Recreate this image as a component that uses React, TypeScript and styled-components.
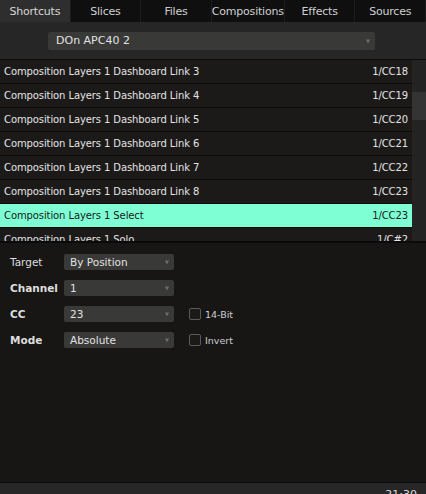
import React from 'react'
import styled, { createGlobalStyle } from 'styled-components'

const GlobalStyle = createGlobalStyle`
  html, body {
    margin: 0;
    padding: 0;
    background: #161514;
  }
  body {
    font-family: "DejaVu Sans", Verdana, sans-serif;
    font-size: 10px;
    color: #dcdcdc;
  }
`

const Screen = styled.div`
  width: 426px;
  height: 494px;
  display: flex;
  flex-direction: column;
  overflow: hidden;
  background: #161514;
`

const TabBar = styled.div`
  display: grid;
  grid-template-columns: repeat(6, 1fr);
  height: 22px;
  background: #0f0f0f;
  flex-shrink: 0;
`

const Tab = styled.div<{ active?: boolean }>`
  display: flex;
  align-items: center;
  justify-content: center;
  font-size: 11px;
  letter-spacing: -0.2px;
  color: ${({ active }) => (active ? '#d6d6d6' : '#cfcfcf')};
  background: ${({ active }) => (active ? '#2e2e2e' : '#0f0f0f')};
  border-right: 1px solid #1c1c1c;
`

const DeviceBar = styled.div`
  height: 37px;
  background: #262626;
  display: flex;
  align-items: center;
  padding: 0 51px 0 48px;
  border-bottom: 1px solid #0c0c0c;
  flex-shrink: 0;
`

const Select = styled.div<{ width?: number }>`
  position: relative;
  box-sizing: border-box;
  width: ${({ width }) => (width ? `${width}px` : '100%')};
  height: ${({ width }) => (width ? '16px' : '18px')};
  padding-left: ${({ width }) => (width ? '6px' : '8px')};
  background: #393938;
  border-radius: 2px;
  display: flex;
  align-items: center;
  font-size: ${({ width }) => (width ? '10.5px' : '11px')};
  color: #e2e2e2;
`

const Arrow = styled.span`
  position: absolute;
  right: 5px;
  top: 50%;
  transform: translateY(-40%);
  width: 0;
  height: 0;
  border-left: 2.5px solid transparent;
  border-right: 2.5px solid transparent;
  border-top: 4px solid #6e6e6e;
`

const ListArea = styled.div`
  display: flex;
  height: 181px;
  flex-shrink: 0;
  border-bottom: 2px solid #0a0a0a;
`

const List = styled.div`
  flex: 1;
  overflow: hidden;
  background: #0b0b0b;
`

const Row = styled.div<{ selected?: boolean }>`
  height: 23px;
  margin-bottom: 1px;
  display: flex;
  align-items: center;
  justify-content: space-between;
  padding: 0 4px 0 4px;
  font-size: 10px;
  letter-spacing: -0.1px;
  background: ${({ selected }) => (selected ? '#7fffd4' : '#1c1a19')};
  color: ${({ selected }) => (selected ? '#1a1a1a' : '#e4e4e4')};
`

const Scrollbar = styled.div`
  width: 14px;
  background: #232323;
  position: relative;
`

const Thumb = styled.div`
  position: absolute;
  top: 32px;
  left: 0;
  right: 0;
  height: 28px;
  background: #343434;
`

const Form = styled.div`
  flex: 1;
  background: #171615;
  padding: 11px 0 0 10px;
  display: flex;
  flex-direction: column;
  gap: 10px;
`

const FormRow = styled.div`
  display: flex;
  align-items: center;
  height: 16px;
`

const Label = styled.div<{ bold?: boolean }>`
  width: 54px;
  font-size: 10.5px;
  font-weight: ${({ bold }) => (bold ? 700 : 400)};
  color: #dedede;
`

const Check = styled.label`
  display: flex;
  align-items: center;
  gap: 4px;
  margin-left: 15px;
  font-size: 9.5px;
  color: #cfcfcf;
`

const Box = styled.span`
  width: 10px;
  height: 10px;
  border: 1px solid #5a5a5a;
  border-radius: 2px;
  background: #1b1a19;
`

const Footer = styled.div`
  height: 11px;
  border-top: 1px solid #0a0a0a;
  background: #272727;
  display: flex;
  justify-content: flex-end;
  align-items: flex-start;
  padding-right: 9px;
  overflow: hidden;
  flex-shrink: 0;
`

const Clock = styled.span`
  font-size: 11px;
  line-height: 11px;
  margin-top: 6px;
  color: #d8d8d8;
`

const tabs = ['Shortcuts', 'Slices', 'Files', 'Compositions', 'Effects', 'Sources']

const rows: [string, string, boolean?][] = [
  ['Composition Layers 1 Dashboard Link 3', '1/CC18'],
  ['Composition Layers 1 Dashboard Link 4', '1/CC19'],
  ['Composition Layers 1 Dashboard Link 5', '1/CC20'],
  ['Composition Layers 1 Dashboard Link 6', '1/CC21'],
  ['Composition Layers 1 Dashboard Link 7', '1/CC22'],
  ['Composition Layers 1 Dashboard Link 8', '1/CC23'],
  ['Composition Layers 1 Select', '1/CC23', true],
  ['Composition Layers 1 Solo', '1/C#2'],
]

const App: React.FC = () => (
  <Screen>
    <GlobalStyle />
    <TabBar>
      {tabs.map((t, i) => (
        <Tab key={t} active={i === 0}>
          {t}
        </Tab>
      ))}
    </TabBar>
    <DeviceBar>
      <Select>
        DOn APC40 2
        <Arrow />
      </Select>
    </DeviceBar>
    <ListArea>
      <List>
        {rows.map(([name, cc, sel]) => (
          <Row key={name} selected={sel}>
            <span>{name}</span>
            <span>{cc}</span>
          </Row>
        ))}
      </List>
      <Scrollbar>
        <Thumb />
      </Scrollbar>
    </ListArea>
    <Form>
      <FormRow>
        <Label>Target</Label>
        <Select width={110}>
          By Position
          <Arrow />
        </Select>
      </FormRow>
      <FormRow>
        <Label bold>Channel</Label>
        <Select width={110}>
          1
          <Arrow />
        </Select>
      </FormRow>
      <FormRow>
        <Label bold>CC</Label>
        <Select width={110}>
          23
          <Arrow />
        </Select>
        <Check>
          <Box />
          14-Bit
        </Check>
      </FormRow>
      <FormRow>
        <Label bold>Mode</Label>
        <Select width={110}>
          Absolute
          <Arrow />
        </Select>
        <Check>
          <Box />
          Invert
        </Check>
      </FormRow>
    </Form>
    <Footer>
      <Clock>21:30</Clock>
    </Footer>
  </Screen>
)

export default App
